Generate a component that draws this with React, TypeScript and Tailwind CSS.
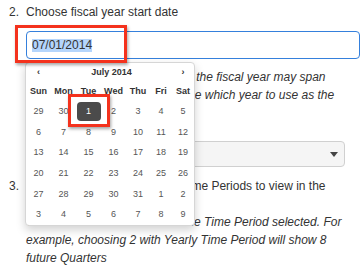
import React from "react";

const weeks: string[][] = [
  ["29", "30", "1", "2", "3", "4", "5"],
  ["6", "7", "8", "9", "10", "11", "12"],
  ["13", "14", "15", "16", "17", "18", "19"],
  ["20", "21", "22", "23", "24", "25", "26"],
  ["27", "28", "29", "30", "31", "1", "2"],
  ["3", "4", "5", "6", "7", "8", "9"],
];

const dayNames = ["Sun", "Mon", "Tue", "Wed", "Thu", "Fri", "Sat"];

function Calendar() {
  return (
    <div className="absolute left-[25px] top-[62px] w-[170px] h-[164px] bg-white border border-[#d6d6d6] rounded-[4px] shadow-[0_4px_10px_rgba(0,0,0,0.18)] text-[9px] text-[#555]">
      <div className="grid grid-cols-[25px_25px_25px_25px_24px_22px_22px]">
        <div className="h-[17px] flex items-center justify-center font-bold text-[#333]">‹</div>
        <div className="col-span-5 h-[17px] flex items-center justify-center font-bold text-[#333]">July 2014</div>
        <div className="h-[17px] flex items-center justify-center font-bold text-[#333]">›</div>
        {dayNames.map((d) => (
          <div key={d} className="h-[21px] flex items-center justify-center font-bold text-[#333]">
            {d}
          </div>
        ))}
        {weeks.map((w, wi) =>
          w.map((d, di) => {
            const active = wi === 0 && di === 2;
            return (
              <div key={wi + "-" + di} className="h-[20.6px] flex items-center justify-center">
                {active ? (
                  <div className="w-[24px] h-[19.5px] rounded-[4px] bg-[#4b4b4b] text-white flex items-center justify-center">
                    {d}
                  </div>
                ) : (
                  d
                )}
              </div>
            );
          })
        )}
      </div>
    </div>
  );
}

export default function App() {
  return (
    <div className="relative w-[363px] h-[273px] overflow-hidden bg-white font-['Liberation_Sans',Arial,sans-serif] text-[12px] leading-[18px] text-[#333]">
      <div className="pt-[3px]">
        <div className="flex">
          <div className="w-[26px] pl-[9px] shrink-0">2.</div>
          <div className="w-[334px]">
            <div className="whitespace-nowrap">Choose fiscal year start date</div>
            <div className="mt-[10px] h-[28px] border border-[#3580dc] rounded-[4px] flex items-center pl-[5px]">
              <span className="bg-[#b4d5fc] leading-[13px]">07/01/2014</span>
            </div>
            <div className="mt-[9px] italic whitespace-nowrap">
              Depending on the chosen date, the fiscal year may span
              <br />
              across two years. Please choose which year to use as the
              <br />
              fiscal year label.
            </div>
            <div className="mt-[19px] w-[319px] h-[26px] border border-[#d0d0d0] rounded-[4px] bg-[#f5f5f5] flex items-center justify-end pr-[6px]">
              <svg width="8" height="5" viewBox="0 0 8 5">
                <path d="M0 0 L8 0 L4 5 Z" fill="#444" />
              </svg>
            </div>
          </div>
        </div>
        <div className="flex mt-[10px]">
          <div className="w-[26px] pl-[9px] shrink-0">3.</div>
          <div className="w-[334px] whitespace-nowrap">
            <div>
              Choose the number of future Time Periods to view in the
              <br />
              forecast.
            </div>
            <div className="italic">
              The number is also based on the Time Period selected. For
              <br />
              example, choosing 2 with Yearly Time Period will show 8
              <br />
              future Quarters
            </div>
          </div>
        </div>
      </div>

      <Calendar />

      <div className="absolute left-[15px] top-[25px] w-[112px] h-[38px] border-[3px] border-[#f4321d] shadow-[1px_2px_3px_rgba(0,0,0,0.35)]" />
      <div className="absolute left-[68px] top-[94px] w-[42px] h-[33px] border-[3px] border-[#f4321d] shadow-[1px_2px_3px_rgba(0,0,0,0.35)]" />
    </div>
  );
}
